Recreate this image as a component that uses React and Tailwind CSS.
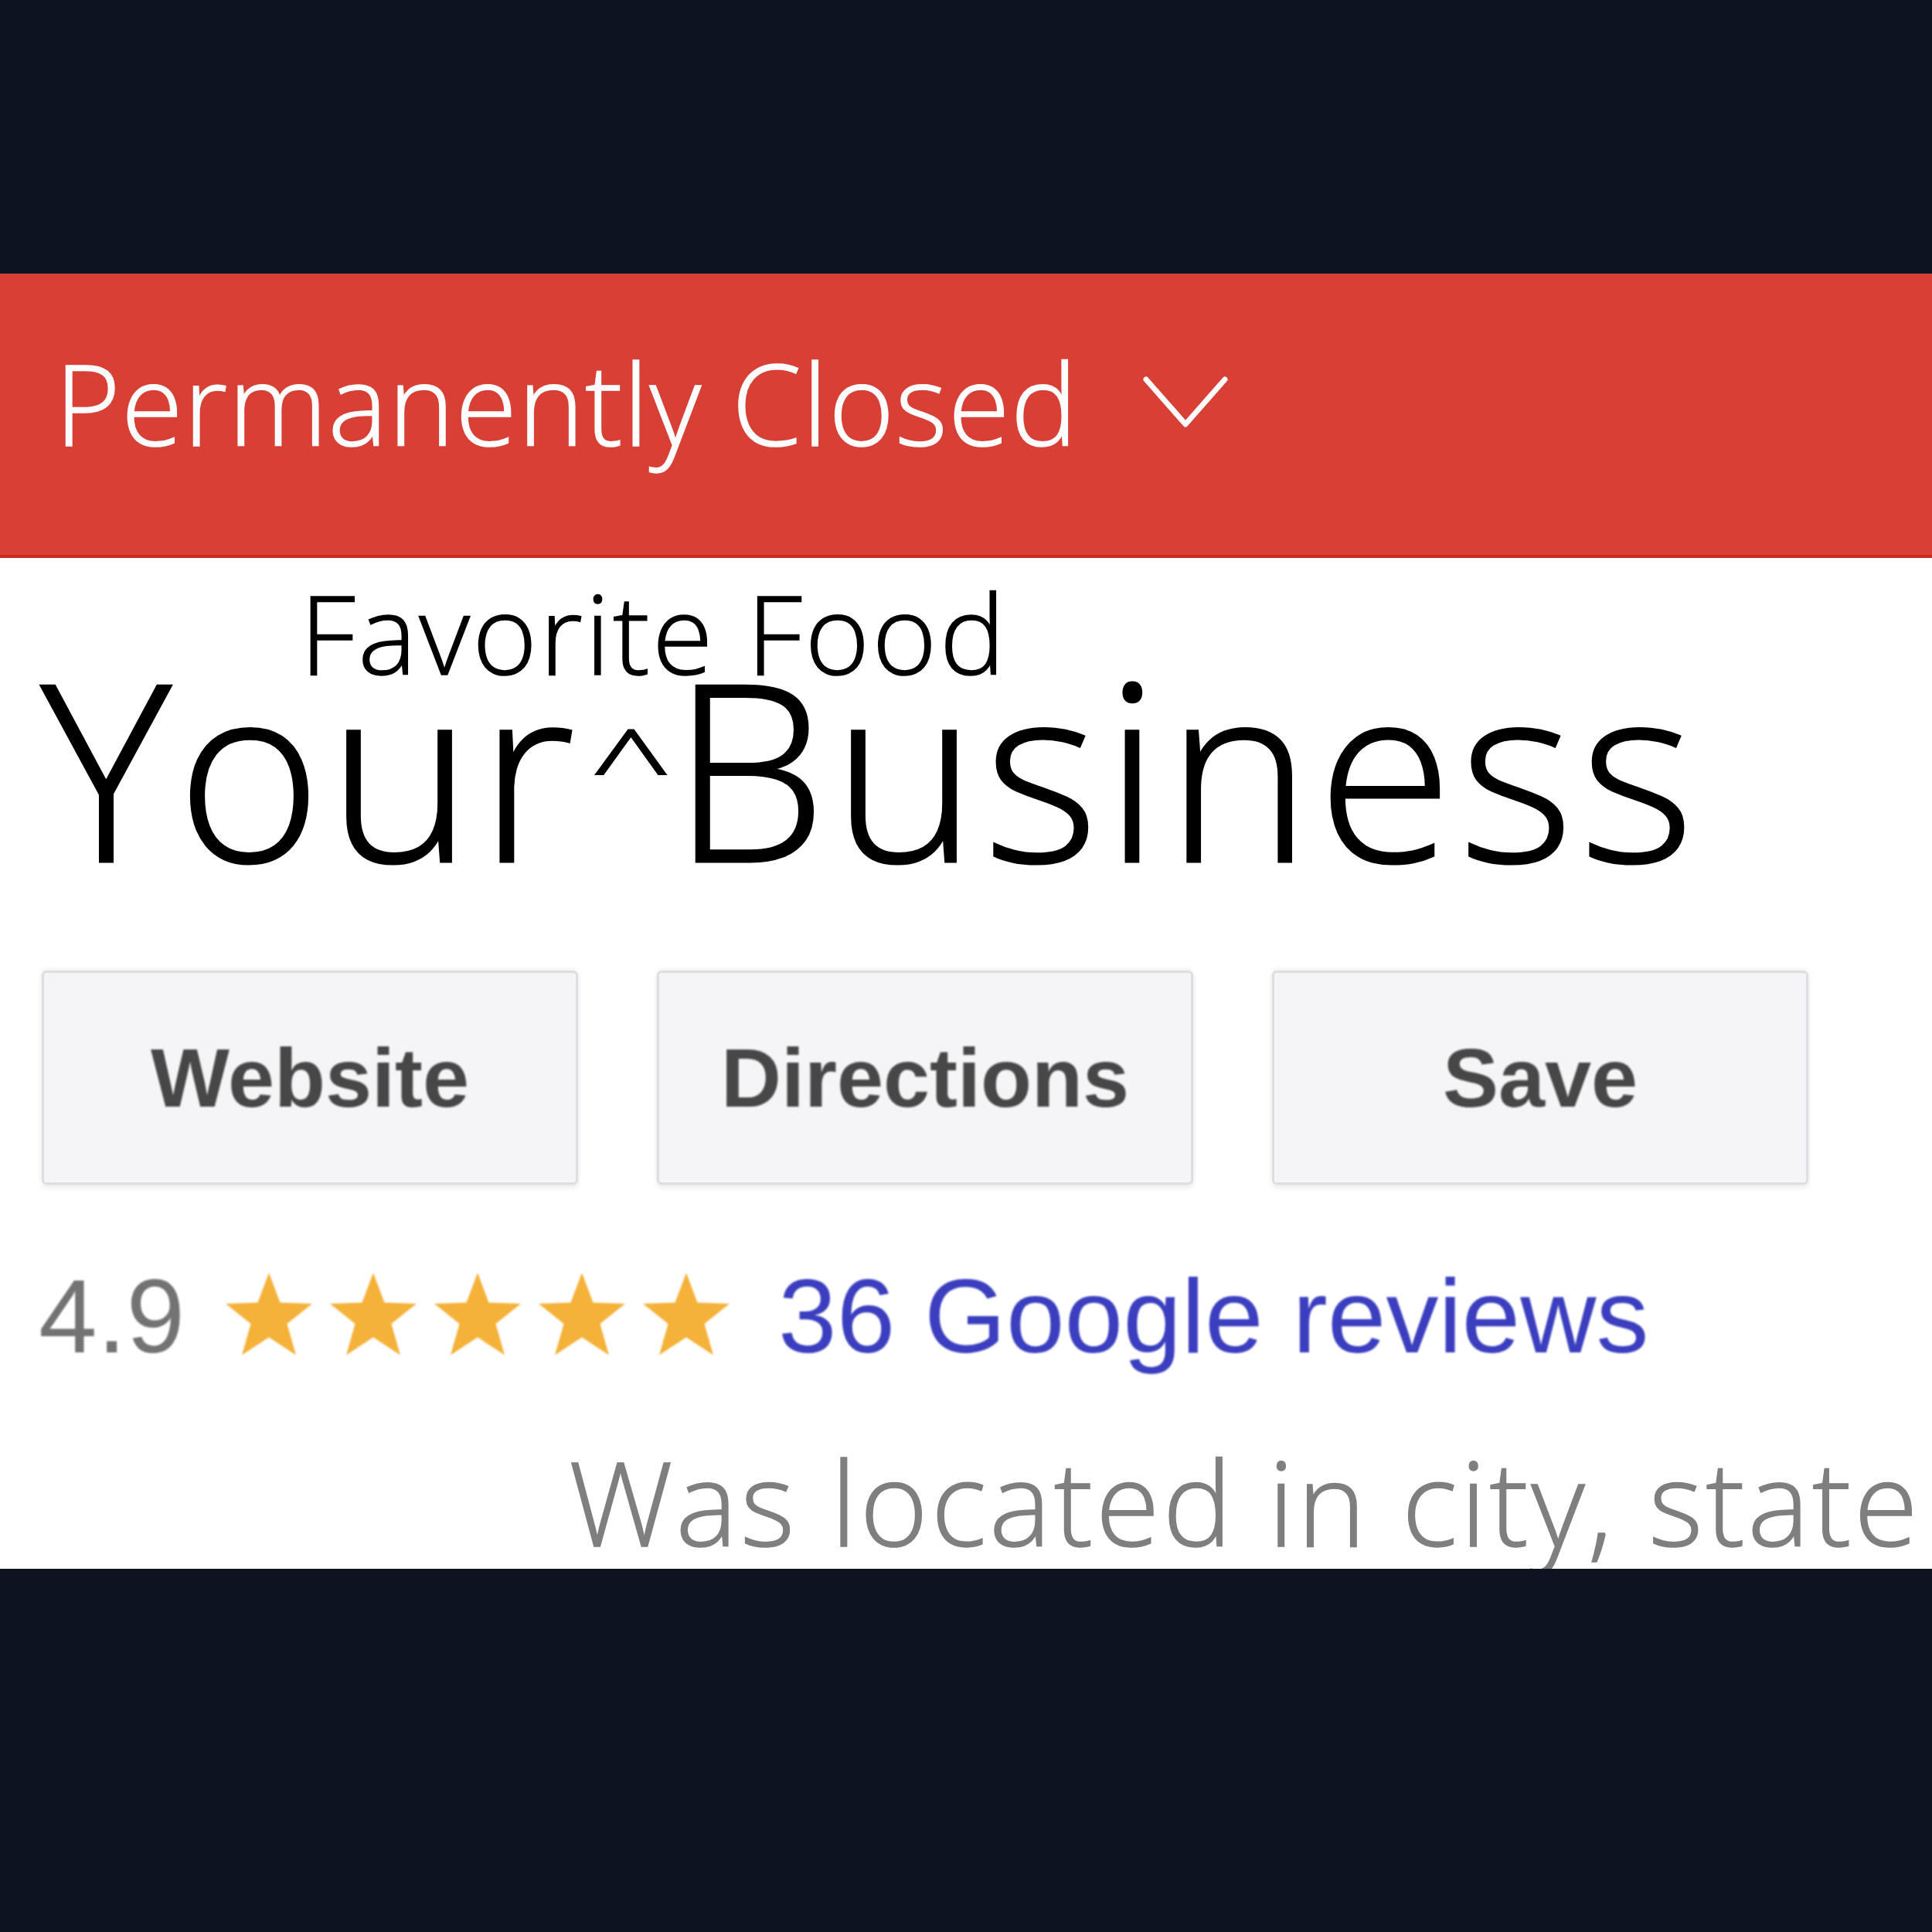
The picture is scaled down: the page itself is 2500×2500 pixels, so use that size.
import React from "react";

// closed-business listing card, big mockup style
const sans = { fontFamily: '"Open Sans", "Noto Sans", sans-serif' };
const arial = { fontFamily: '"Liberation Sans", Arial, sans-serif' };

function Star() {
  return (
    <svg width="120" height="118" viewBox="0 0 24 23.6" className="shrink-0">
      <polygon
        points="12,0.6 14.9,8.3 23.2,8.6 16.7,13.8 19,21.9 12,17.3 5,21.9 7.3,13.8 0.8,8.6 9.1,8.3"
        fill="#f5b23a"
      />
    </svg>
  );
}

function ActionButton({ label }) {
  return (
    <div className="w-[694px] h-[277px] shrink-0 flex items-center justify-center bg-[#f5f5f7] border-[3px] border-[#dedee2] rounded-[6px] shadow-[0_4px_6px_rgba(0,0,0,0.08),0_-3px_5px_rgba(0,0,0,0.05)]">
      <span
        className="text-[108px] font-bold leading-none text-[#474747] blur-[1px]"
        style={arial}
      >
        {label}
      </span>
    </div>
  );
}

export default function App() {
  return (
    <div className="w-[2500px] h-[2500px] bg-[#0e1320] pt-[354px]">
      <div className="w-[2500px] h-[1676px] bg-white overflow-hidden flex flex-col">
        {/* status banner */}
        <div className="h-[368px] shrink-0 bg-[#d84036] border-b-[4px] border-[#c72b20] pt-[94px] pl-[71px] flex items-start">
          <span className="w-[1406px] shrink-0 text-[145px] font-light tracking-[0.008em] leading-none text-white whitespace-nowrap [-webkit-text-stroke:1.5px_currentColor]" style={sans}>
            Permanently Closed
          </span>
          <svg width="114" height="72" viewBox="0 0 114 72" className="mt-[37px] shrink-0">
            <polyline
              points="6,6 57,64 108,6"
              fill="none"
              stroke="#ffffff"
              strokeWidth="7"
              strokeLinecap="round"
              strokeLinejoin="round"
            />
          </svg>
        </div>

        {/* name */}
        <div className="pt-[24px] pl-[388px] text-[143px] font-light tracking-[0.023em] leading-none text-black whitespace-nowrap [-webkit-text-stroke:1.5px_currentColor]" style={sans}>
          Favorite Food
        </div>
        <div className="mt-[-57px] pl-[53px] text-[319px] font-light tracking-[0.024em] leading-none text-black whitespace-nowrap [-webkit-text-stroke:3px_currentColor]" style={sans}>
          Your
          <span className="inline-block ml-[12px] text-[185px] tracking-normal -translate-y-[57px] scale-y-[0.7]">^</span>
          Business
        </div>

        {/* actions */}
        <div className="mt-[105px] pl-[54px] flex gap-[102px]">
          <ActionButton label="Website" />
          <ActionButton label="Directions" />
          <ActionButton label="Save" />
        </div>

        {/* rating */}
        <div className="mt-[102px] pl-[50px] flex items-center leading-none blur-[0.8px]" style={arial}>
          <span className="text-[136px] text-[#737373]">4.9</span>
          <div className="ml-[49px] flex gap-[15px]">
            <Star />
            <Star />
            <Star />
            <Star />
            <Star />
          </div>
          <span className="ml-[59px] text-[136px] text-[#3b3fbf] whitespace-nowrap">36 Google reviews</span>
        </div>

        {/* location */}
        <div className="mt-[96px] pl-[736px] text-[151px] font-light tracking-[0.024em] leading-none text-[#7f7f7f] whitespace-nowrap [-webkit-text-stroke:1.5px_currentColor]" style={sans}>
          Was located in city, state
        </div>
      </div>
    </div>
  );
}
